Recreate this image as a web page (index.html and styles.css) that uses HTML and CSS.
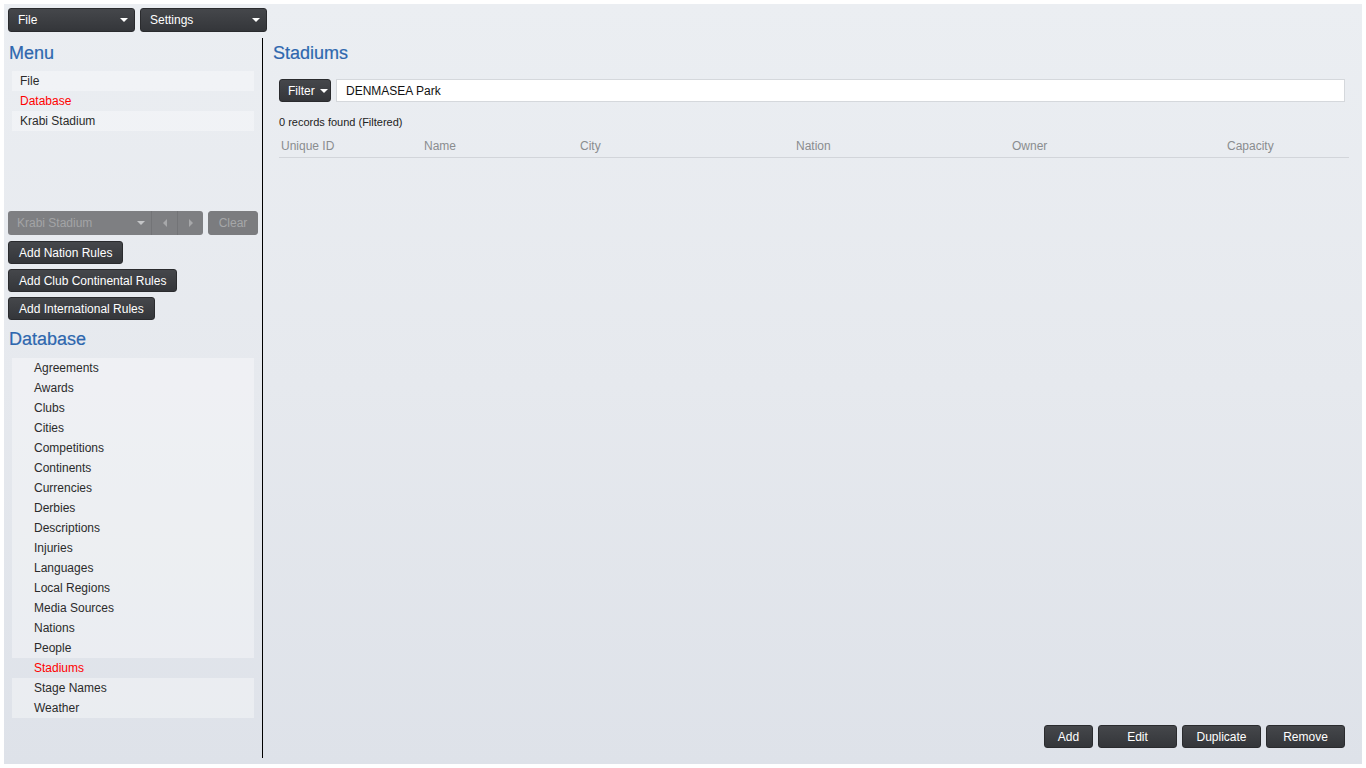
FILE: index.html
```html
<!DOCTYPE html>
<html lang="en">
<head>
  <meta charset="UTF-8">
  <title>Database Editor - Stadiums</title>
  <link rel="stylesheet" href="styles.css">
</head>
<body>
  <div class="app">
    <!-- Top dropdowns -->
    <div class="topbar">
      <button class="btn dropdown">File <span class="caret"></span></button>
      <button class="btn dropdown">Settings <span class="caret"></span></button>
    </div>

    <div class="layout">
      <!-- Sidebar -->
      <aside class="sidebar">
        <h2 class="section-title">Menu</h2>
        <ul class="nav-list menu-list">
          <li>File</li>
          <li class="active">Database</li>
          <li>Krabi Stadium</li>
        </ul>

        <div class="picker-row">
          <div class="picker">
            <span class="picker-label">Krabi Stadium</span>
            <span class="picker-part picker-caret"><span class="caret"></span></span>
            <span class="picker-part"><span class="tri-left"></span></span>
            <span class="picker-part"><span class="tri-right"></span></span>
          </div>
          <button class="btn btn-disabled">Clear</button>
        </div>

        <button class="btn rule-btn">Add Nation Rules</button>
        <button class="btn rule-btn">Add Club Continental Rules</button>
        <button class="btn rule-btn">Add International Rules</button>

        <h2 class="section-title db-title">Database</h2>
        <ul class="nav-list db-list">
          <li>Agreements</li>
          <li>Awards</li>
          <li>Clubs</li>
          <li>Cities</li>
          <li>Competitions</li>
          <li>Continents</li>
          <li>Currencies</li>
          <li>Derbies</li>
          <li>Descriptions</li>
          <li>Injuries</li>
          <li>Languages</li>
          <li>Local Regions</li>
          <li>Media Sources</li>
          <li>Nations</li>
          <li>People</li>
          <li class="active">Stadiums</li>
          <li>Stage Names</li>
          <li>Weather</li>
        </ul>
      </aside>

      <!-- Main content -->
      <main class="main">
        <h2 class="section-title">Stadiums</h2>

        <div class="filter-row">
          <button class="btn filter-btn">Filter <span class="caret"></span></button>
          <input class="filter-input" type="text" value="DENMASEA Park">
        </div>

        <p class="record-count">0 records found (Filtered)</p>

        <table class="records">
          <thead>
            <tr>
              <th class="col-id">Unique ID</th>
              <th class="col-name">Name</th>
              <th class="col-city">City</th>
              <th class="col-nation">Nation</th>
              <th class="col-owner">Owner</th>
              <th>Capacity</th>
            </tr>
          </thead>
          <tbody></tbody>
        </table>

        <div class="actions">
          <button class="btn act-add">Add</button>
          <button class="btn act-wide">Edit</button>
          <button class="btn act-wide">Duplicate</button>
          <button class="btn act-wide">Remove</button>
        </div>
      </main>
    </div>
  </div>
</body>
</html>
```

FILE: styles.css
```css
/* General */
html, body {
  margin: 0;
  padding: 0;
  background: #ffffff;
}

body {
  font-family: 'Liberation Sans', Arial, sans-serif;
  font-size: 12px;
  color: #2b2b2b;
}

.app {
  margin: 4px;
  height: 760px;
  box-sizing: border-box;
  padding: 4px 4px 6px 4px;
  background: linear-gradient(to bottom, #ebeef2 0%, #e6e9ee 50%, #dee2e9 100%);
  display: flex;
  flex-direction: column;
}

/* Buttons */
.btn {
  font-family: 'Liberation Sans', Arial, sans-serif;
  font-size: 12px;
  color: #ffffff;
  background: linear-gradient(to bottom, #45474b, #34363a);
  border: 1px solid #2a2b2e;
  border-radius: 3px;
  height: 24px;
  padding: 0 9px;
  text-align: left;
  white-space: nowrap;
  cursor: pointer;
  box-sizing: border-box;
}

.caret {
  display: inline-block;
  width: 0;
  height: 0;
  border-left: 4px solid transparent;
  border-right: 4px solid transparent;
  border-top: 4px solid #ffffff;
  vertical-align: middle;
}

/* Top bar */
.topbar {
  display: flex;
  gap: 5px;
  height: 24px;
}

.dropdown {
  width: 127px;
  display: flex;
  align-items: center;
  justify-content: space-between;
  padding: 0 6px 0 9px;
}

/* Layout */
.layout {
  display: flex;
  flex: 1;
  margin-top: 6px;
  min-height: 0;
}

.sidebar {
  width: 250px;
  display: flex;
  flex-direction: column;
  align-items: flex-start;
}

.section-title {
  margin: 4px 0 7px 1px;
  font-size: 18px;
  font-weight: normal;
  line-height: 22px;
  color: #2e67ae;
  -webkit-text-stroke: 0.2px #2e67ae;
}

/* Navigation lists */
.nav-list {
  list-style: none;
  margin: 0 0 0 4px;
  padding: 0;
  width: 242px;
}

.nav-list li {
  height: 20px;
  line-height: 20px;
  padding-left: 8px;
  background: rgba(255, 255, 255, 0.35);
  color: #2b2b2b;
}

.nav-list li.active {
  background: transparent;
  color: #ff0000;
}

.menu-list {
  height: 140px;
}

.db-list li {
  padding-left: 22px;
}

/* Record picker */
.picker-row {
  display: flex;
  gap: 5px;
  margin-bottom: 6px;
}

.picker {
  width: 195px;
  height: 24px;
  display: flex;
  background: #7e7f82;
  border-radius: 3px;
  color: #a3a4a6;
  box-sizing: border-box;
}

.picker-label {
  flex: 1;
  line-height: 24px;
  padding-left: 9px;
}

.picker-part {
  width: 25px;
  display: flex;
  align-items: center;
  justify-content: center;
  border-left: 1px solid #737477;
}

.picker-caret {
  border-left: none;
  width: 20px;
}

.picker .caret {
  border-top-color: #c4c5c7;
}

.tri-left,
.tri-right {
  width: 0;
  height: 0;
  border-top: 4px solid transparent;
  border-bottom: 4px solid transparent;
}

.tri-left {
  border-right: 4px solid #a7a8aa;
}

.tri-right {
  border-left: 4px solid #a7a8aa;
}

.btn-disabled {
  width: 50px;
  background: #7b7c7f;
  border-color: #7b7c7f;
  color: #a6a7a9;
  text-align: center;
  padding: 0;
}

.rule-btn {
  height: 23px;
  margin-bottom: 5px;
  padding: 0 10px;
}

.db-title {
  margin-top: 3px;
  margin-bottom: 8px;
}

/* Main */
.main {
  flex: 1;
  margin-left: 4px;
  border-left: 1px solid #000000;
  padding: 0 13px 0 9px;
  display: flex;
  flex-direction: column;
}

.filter-row {
  display: flex;
  gap: 5px;
  margin: 8px 0 0 7px;
  height: 23px;
}

.filter-btn {
  height: 23px;
  width: 52px;
  padding: 0 0 0 8px;
}

.filter-btn .caret {
  margin-left: 2px;
}

.filter-input {
  flex: 1;
  height: 23px;
  box-sizing: border-box;
  border: 1px solid #d5d8dc;
  background: #ffffff;
  padding: 0 9px;
  font-family: 'Liberation Sans', Arial, sans-serif;
  font-size: 12px;
  color: #111111;
  outline: none;
}

.record-count {
  margin: 13px 0 0 7px;
  font-size: 11px;
  line-height: 14px;
  color: #222222;
}

/* Table */
.records {
  margin: 6px -4px 0 7px;
  border-collapse: collapse;
  width: calc(100% - 3px);
}

.records th {
  text-align: left;
  font-weight: normal;
  color: #8a8c8f;
  height: 22px;
  padding: 0 0 0 2px;
  border-bottom: 1px solid #d2d5da;
}

.col-id { width: 141px; }
.col-name { width: 154px; }
.col-city { width: 214px; }
.col-nation { width: 214px; }
.col-owner { width: 213px; }

/* Bottom actions */
.actions {
  margin-top: auto;
  margin-bottom: 10px;
  display: flex;
  justify-content: flex-end;
  gap: 5px;
}

.actions .btn {
  height: 23px;
  text-align: center;
  padding: 0;
}

.act-add {
  width: 49px;
}

.act-wide {
  width: 79px;
}
```
